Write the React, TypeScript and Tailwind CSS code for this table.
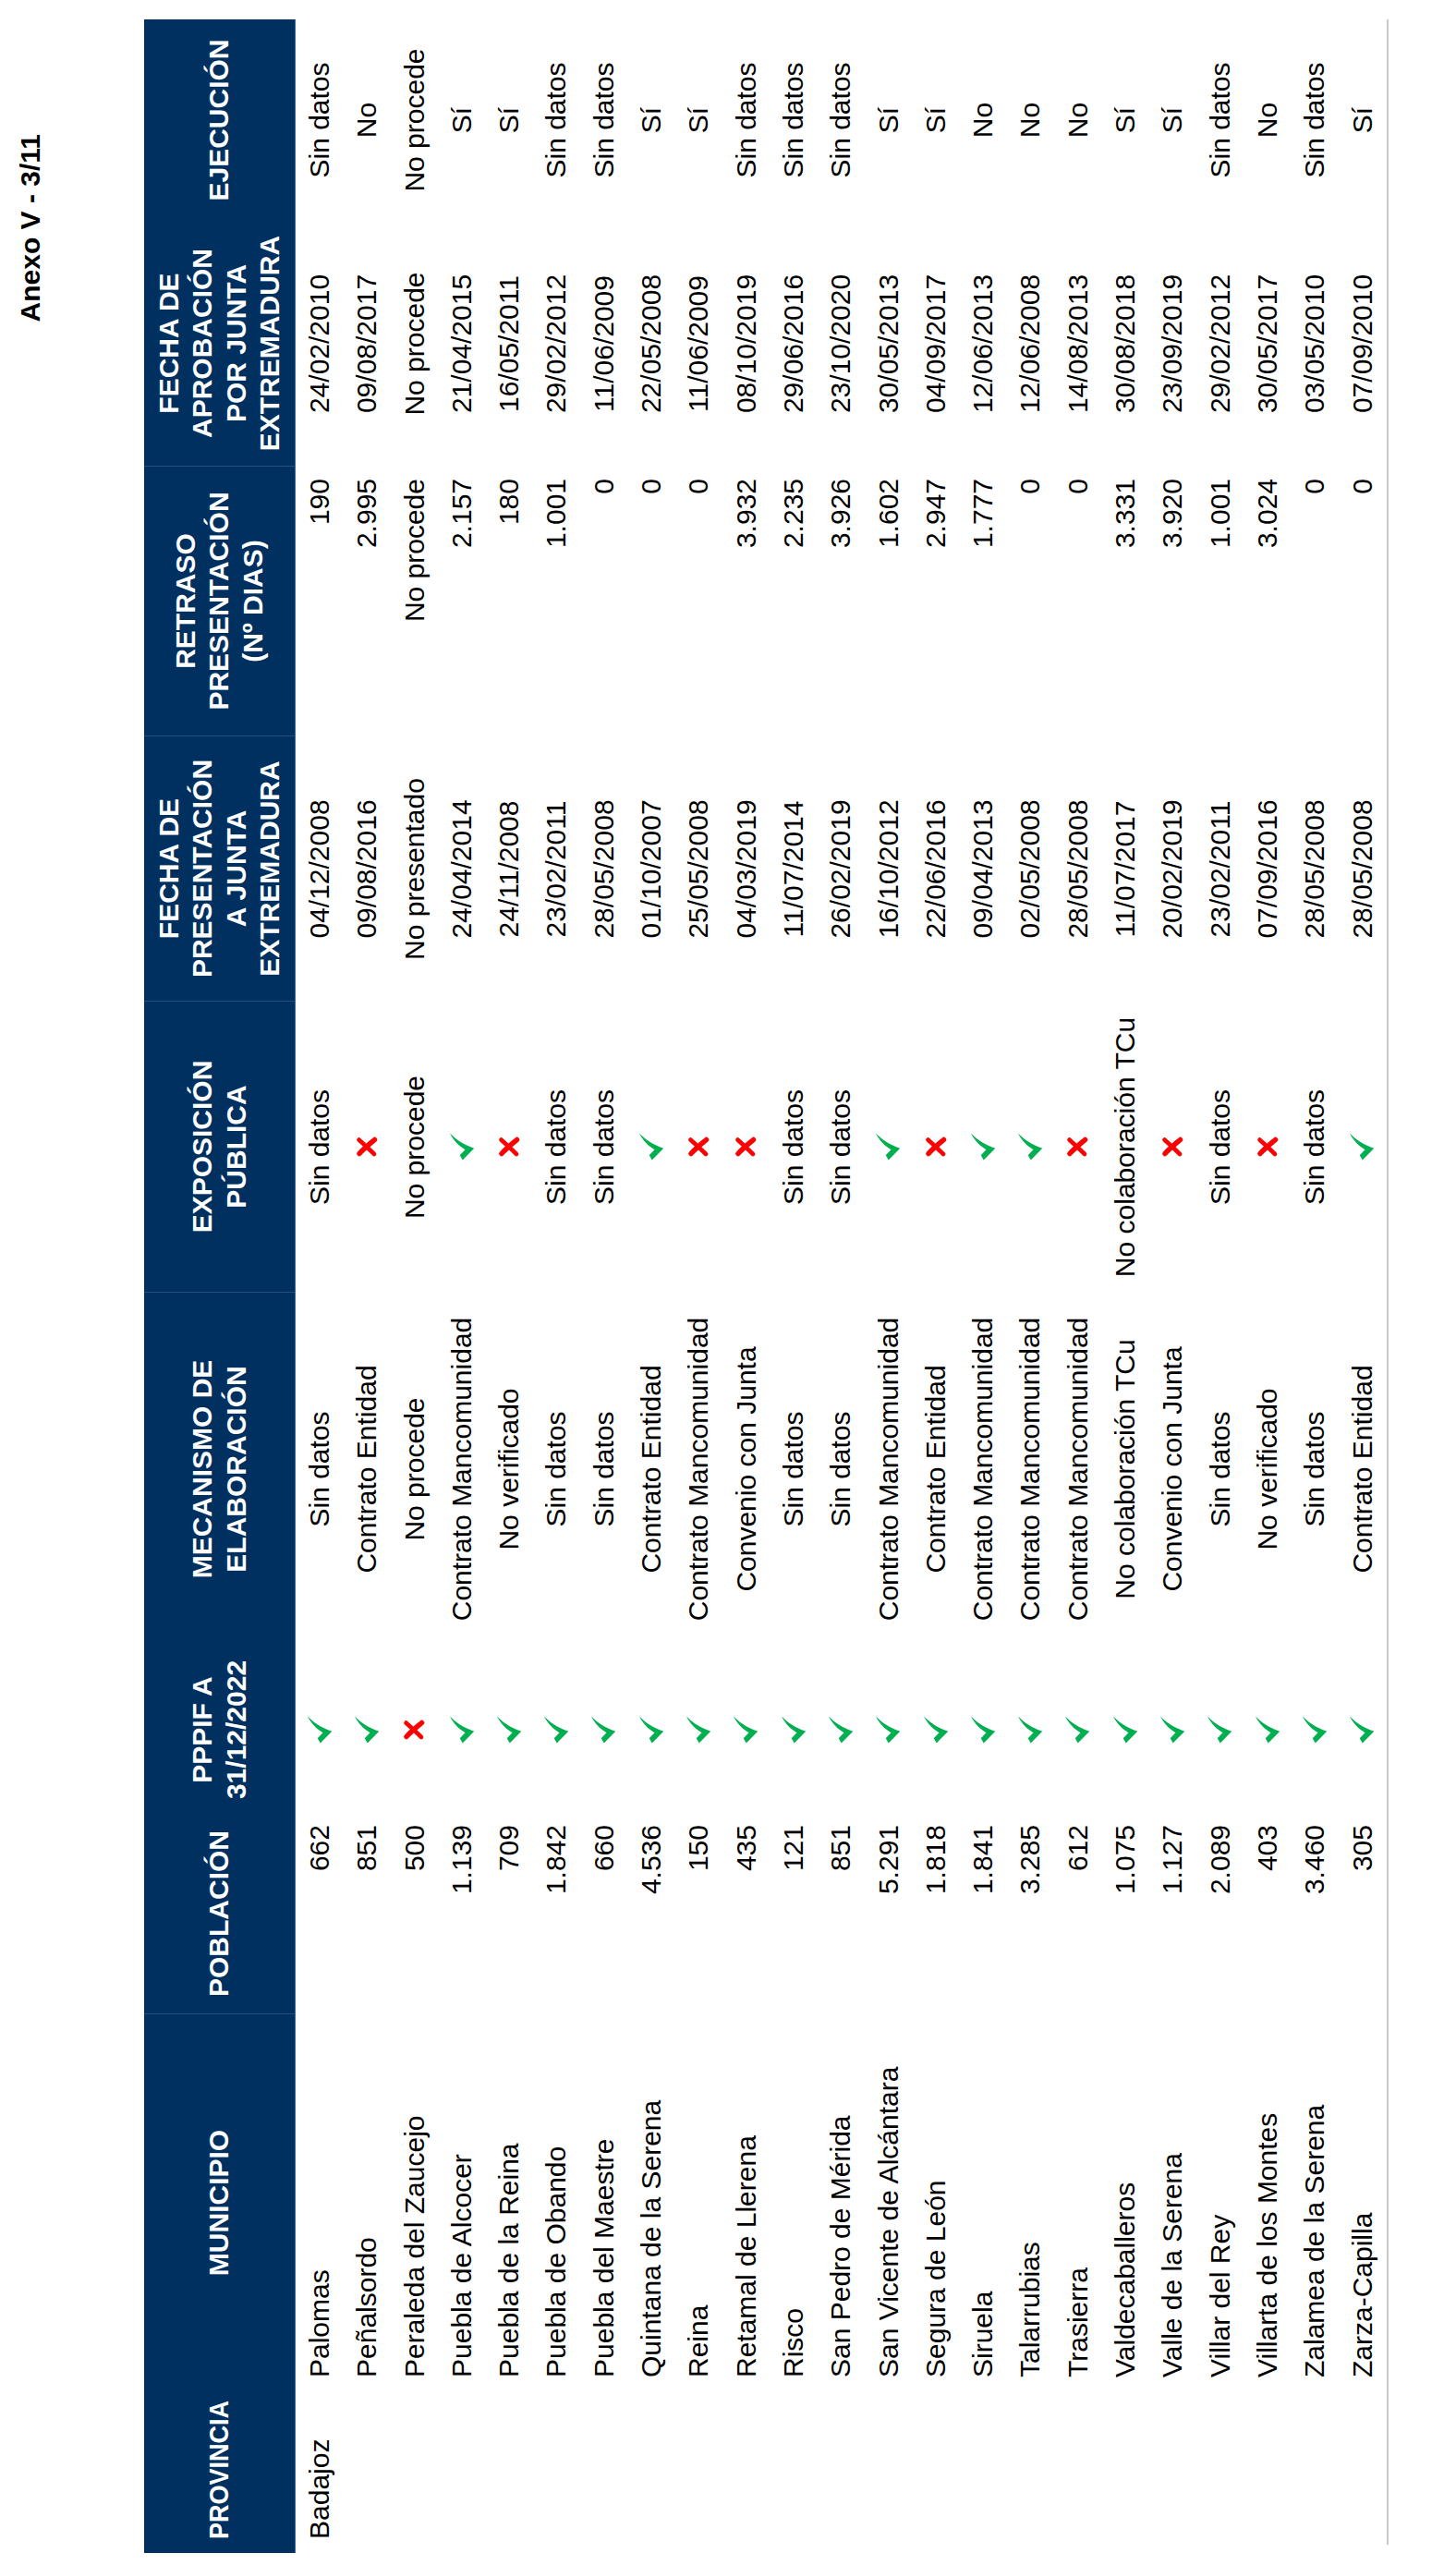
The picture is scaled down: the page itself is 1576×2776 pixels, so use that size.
import React from 'react';

type Cell = string | 'ok' | 'ko';

const headers: string[][] = [
  ['PROVINCIA'],
  ['MUNICIPIO'],
  ['POBLACIÓN'],
  ['PPPIF A', '31/12/2022'],
  ['MECANISMO DE', 'ELABORACIÓN'],
  ['EXPOSICIÓN', 'PÚBLICA'],
  ['FECHA DE', 'PRESENTACIÓN', 'A JUNTA', 'EXTREMADURA'],
  ['RETRASO', 'PRESENTACIÓN', '(Nº DIAS)'],
  ['FECHA DE', 'APROBACIÓN', 'POR JUNTA', 'EXTREMADURA'],
  ['EJECUCIÓN'],
];

const headerCellClass = [
  'justify-start pl-[15px]',
  'justify-center',
  'justify-center border-l border-[#24507c]',
  'justify-center',
  'justify-center',
  'justify-center border-l border-[#24507c]',
  'justify-center border-l border-[#24507c]',
  'justify-center border-l border-[#24507c]',
  'justify-center border-l border-[#24507c]',
  'justify-center',
];

const dataCellClass = [
  'pl-[15px] justify-start',
  'pl-[15px] justify-start',
  'pr-[12px] justify-end',
  'justify-center',
  'justify-center',
  'justify-center',
  'justify-center',
  'pr-[13px] justify-end',
  'justify-center',
  'justify-center',
];

const rows: Cell[][] = [
  ['Badajoz', 'Palomas', '662', 'ok', 'Sin datos', 'Sin datos', '04/12/2008', '190', '24/02/2010', 'Sin datos'],
  ['', 'Peñalsordo', '851', 'ok', 'Contrato Entidad', 'ko', '09/08/2016', '2.995', '09/08/2017', 'No'],
  ['', 'Peraleda del Zaucejo', '500', 'ko', 'No procede', 'No procede', 'No presentado', 'No procede', 'No procede', 'No procede'],
  ['', 'Puebla de Alcocer', '1.139', 'ok', 'Contrato Mancomunidad', 'ok', '24/04/2014', '2.157', '21/04/2015', 'Sí'],
  ['', 'Puebla de la Reina', '709', 'ok', 'No verificado', 'ko', '24/11/2008', '180', '16/05/2011', 'Sí'],
  ['', 'Puebla de Obando', '1.842', 'ok', 'Sin datos', 'Sin datos', '23/02/2011', '1.001', '29/02/2012', 'Sin datos'],
  ['', 'Puebla del Maestre', '660', 'ok', 'Sin datos', 'Sin datos', '28/05/2008', '0', '11/06/2009', 'Sin datos'],
  ['', 'Quintana de la Serena', '4.536', 'ok', 'Contrato Entidad', 'ok', '01/10/2007', '0', '22/05/2008', 'Sí'],
  ['', 'Reina', '150', 'ok', 'Contrato Mancomunidad', 'ko', '25/05/2008', '0', '11/06/2009', 'Sí'],
  ['', 'Retamal de Llerena', '435', 'ok', 'Convenio con Junta', 'ko', '04/03/2019', '3.932', '08/10/2019', 'Sin datos'],
  ['', 'Risco', '121', 'ok', 'Sin datos', 'Sin datos', '11/07/2014', '2.235', '29/06/2016', 'Sin datos'],
  ['', 'San Pedro de Mérida', '851', 'ok', 'Sin datos', 'Sin datos', '26/02/2019', '3.926', '23/10/2020', 'Sin datos'],
  ['', 'San Vicente de Alcántara', '5.291', 'ok', 'Contrato Mancomunidad', 'ok', '16/10/2012', '1.602', '30/05/2013', 'Sí'],
  ['', 'Segura de León', '1.818', 'ok', 'Contrato Entidad', 'ko', '22/06/2016', '2.947', '04/09/2017', 'Sí'],
  ['', 'Siruela', '1.841', 'ok', 'Contrato Mancomunidad', 'ok', '09/04/2013', '1.777', '12/06/2013', 'No'],
  ['', 'Talarrubias', '3.285', 'ok', 'Contrato Mancomunidad', 'ok', '02/05/2008', '0', '12/06/2008', 'No'],
  ['', 'Trasierra', '612', 'ok', 'Contrato Mancomunidad', 'ko', '28/05/2008', '0', '14/08/2013', 'No'],
  ['', 'Valdecaballeros', '1.075', 'ok', 'No colaboración TCu', 'No colaboración TCu', '11/07/2017', '3.331', '30/08/2018', 'Sí'],
  ['', 'Valle de la Serena', '1.127', 'ok', 'Convenio con Junta', 'ko', '20/02/2019', '3.920', '23/09/2019', 'Sí'],
  ['', 'Villar del Rey', '2.089', 'ok', 'Sin datos', 'Sin datos', '23/02/2011', '1.001', '29/02/2012', 'Sin datos'],
  ['', 'Villarta de los Montes', '403', 'ok', 'No verificado', 'ko', '07/09/2016', '3.024', '30/05/2017', 'No'],
  ['', 'Zalamea de la Serena', '3.460', 'ok', 'Sin datos', 'Sin datos', '28/05/2008', '0', '03/05/2010', 'Sin datos'],
  ['', 'Zarza-Capilla', '305', 'ok', 'Contrato Entidad', 'ok', '28/05/2008', '0', '07/09/2010', 'Sí'],
];

// calligraphic check, like the Wingdings one in the source sheet
const CheckMark: React.FC = () => (
  <svg className="h-[30px] w-[30px]" viewBox="0 0 24 24" fill="#00B050">
    <path d="M0.5 12.6 L4.6 10.2 L9.4 14.8 C12.8 9.2 17.2 4.8 23.6 1.6 C18 7 13.8 13.4 10.6 22.6 Z" />
  </svg>
);

const CrossMark: React.FC = () => (
  <svg className="h-[24px] w-[24px]" viewBox="0 0 24 24" fill="none" stroke="#FF0000" strokeLinecap="round">
    <path d="M4.5 4 C10 9 14 14 19.5 20.5" strokeWidth={5.5} />
    <path d="M19.5 3.5 C14 9.5 10 14 4 20" strokeWidth={4.6} />
  </svg>
);

const renderCell = (value: Cell) => {
  if (value === 'ok') return <CheckMark />;
  if (value === 'ko') return <CrossMark />;
  return <span className="whitespace-nowrap">{value}</span>;
};

const gridCols =
  'grid grid-cols-[175px_408px_217px_182px_382px_315px_287px_292px_266px_218px]';

export default function App() {
  return (
    <div className="h-[2776px] w-[1576px] overflow-hidden bg-white font-['Liberation_Sans',Arial,sans-serif] text-black">
      {/* Landscape page, turned a quarter to the left */}
      <div className="h-[1576px] w-[2776px] origin-top-left translate-y-[2776px] -rotate-90 pl-[13px]">
        {/* Page title */}
        <div className="flex w-[2742px] justify-end pt-[15px] pr-[124px]">
          <h1 className="text-[30px] font-bold leading-[36px]">Anexo V - 3/11</h1>
        </div>

        {/* Table */}
        <div className="mt-[105px] w-[2742px]">
          {/* Header */}
          <div className={`${gridCols} h-[164px] border-b border-[#3d6690] bg-[#00305f] text-white`}>
            {headers.map((lines, i) => (
              <div
                key={i}
                className={`flex items-center text-center text-[30px] font-bold leading-[36.5px] ${headerCellClass[i]}`}>
                <div className={i === 0 ? 'origin-left scale-x-[0.9] text-left' : ''}>
                  {lines.map((l, j) => (
                    <div key={j} className="whitespace-nowrap">
                      {l}
                    </div>
                  ))}
                </div>
              </div>
            ))}
          </div>

          {/* Rows */}
          {rows.map((row, r) => (
            <div key={r} className={`${gridCols} h-[51.3px] text-[30px] leading-[51.3px]`}>
              {row.map((cell, c) => (
                <div key={c} className={`flex items-center ${dataCellClass[c]}`}>
                  {renderCell(cell)}
                </div>
              ))}
            </div>
          ))}

          {/* Closing rule */}
          <div className="ml-[9px] mt-[1px] h-[2px] bg-[#c9c9c9]"></div>
        </div>
      </div>
    </div>
  );
}
